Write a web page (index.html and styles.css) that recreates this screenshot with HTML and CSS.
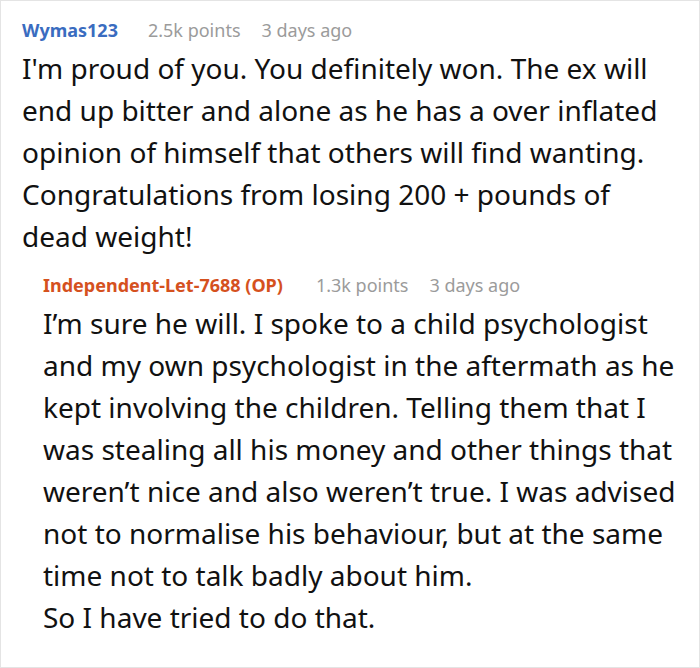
FILE: index.html
```html
<!DOCTYPE html>
<html>
<head>
<meta charset="utf-8">
<link rel="stylesheet" href="styles.css">
</head>
<body>
<div class="frame">
  <div class="comment">
    <div class="meta">
      <span class="author">Wymas123</span>
      <span class="points">2.5k points</span>
      <span class="date">3 days ago</span>
    </div>
    <p class="text">I'm proud of you. You definitely won. The ex will end up bitter and alone as he has a over inflated opinion of himself that others will find wanting. Congratulations from losing 200 + pounds of dead weight!</p>
    <div class="comment reply">
      <div class="meta">
        <span class="author op">Independent-Let-7688 (OP)</span>
        <span class="points">1.3k points</span>
        <span class="date">3 days ago</span>
      </div>
      <p class="text">I’m sure he will. I spoke to a child psychologist and my own psychologist in the aftermath as he kept involving the children. Telling them that I was stealing all his money and other things that weren’t nice and also weren’t true. I was advised not to normalise his behaviour, but at the same time not to talk badly about him.<br>So I have tried to do that.</p>
    </div>
  </div>
</div>
</body>
</html>
```
FILE: styles.css
```css
html, body {
  margin: 0;
  padding: 0;
  background: #fff;
}
.frame {
  box-sizing: border-box;
  width: 700px;
  height: 668px;
  border: 1px solid #e4e4e4;
  padding: 17px 21px 0 21px;
  font-family: "Noto Sans", "Open Sans", sans-serif;
  color: #111;
  overflow: hidden;
}
.meta {
  display: flex;
  align-items: baseline;
  font-size: 18px;
  line-height: 24px;
  white-space: nowrap;
}
.author {
  font-weight: 700;
  color: #3a6cc0;
  margin-right: 30px;
}
.author.op {
  color: #d5511e;
  margin-right: 33px;
}
.points {
  color: #9b9b9b;
  margin-right: 21px;
}
.date {
  color: #9b9b9b;
}
.text {
  margin: 5px 0 0 0;
  font-size: 28px;
  line-height: 42px;
  color: #111;
}
.reply {
  margin-top: 16px;
  padding-left: 21px;
}
.reply .text {
  margin-top: 5px;
}
```
